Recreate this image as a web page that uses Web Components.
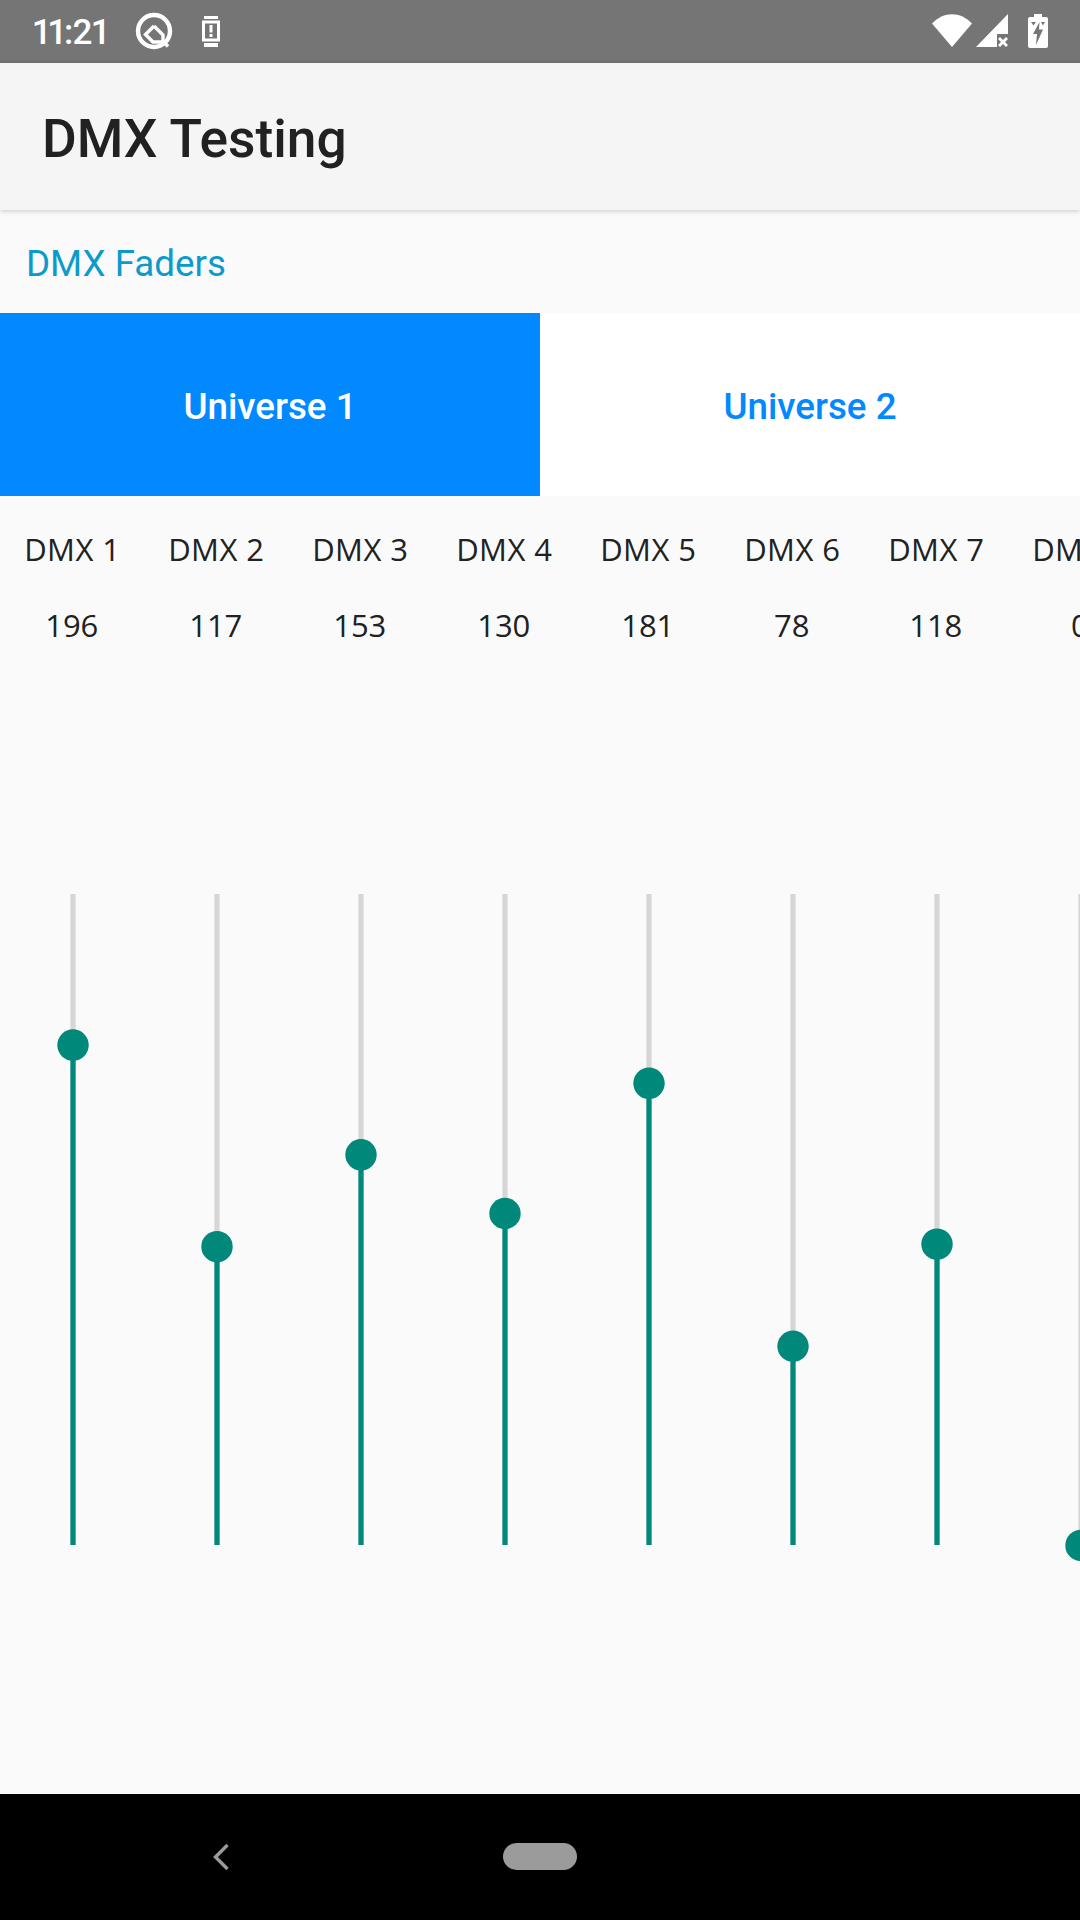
<!DOCTYPE html>
<html>
<head>
<meta charset="utf-8">
<style>
    html, body { margin: 0; padding: 0; }
    body { width: 1080px; height: 1920px; overflow: hidden; background: #fafafa; font-family: Roboto, sans-serif; }
    #app { display: flex; flex-direction: column; height: 1920px; }
</style>
</head>
<body>
<div id="app">
    <status-bar time="11:21"></status-bar>
    <app-bar>DMX Testing</app-bar>
    <section-title>DMX Faders</section-title>
    <universe-tabs>
        <universe-tab active>Universe 1</universe-tab>
        <universe-tab>Universe 2</universe-tab>
    </universe-tabs>
    <fader-bank>
        <dmx-fader channel="1" value="196"></dmx-fader>
        <dmx-fader channel="2" value="117"></dmx-fader>
        <dmx-fader channel="3" value="153"></dmx-fader>
        <dmx-fader channel="4" value="130"></dmx-fader>
        <dmx-fader channel="5" value="181"></dmx-fader>
        <dmx-fader channel="6" value="78"></dmx-fader>
        <dmx-fader channel="7" value="118"></dmx-fader>
        <dmx-fader channel="8" value="0"></dmx-fader>
    </fader-bank>
    <nav-bar></nav-bar>
</div>
<script>
(function(){

function define(name, html, proto)
{
    const template = document.createElement('template');
    template.innerHTML = html;

    customElements.define(name, class extends HTMLElement {
        constructor()
        {
            super();
            this._shadowRoot = this.attachShadow({mode: 'open'});
            this._shadowRoot.appendChild(template.content.cloneNode(true));
        }

        connectedCallback()
        {
            if(proto)
                proto.call(this, this._shadowRoot);
        }
    });
}

define('status-bar', `
<style>
    :host{
        display: flex;
        flex: none;
        height: 63px;
        background: #757575;
        color: #fff;
        align-items: center;
        font: 500 35px Roboto, sans-serif;
    }
    .left{ display: flex; align-items: center; margin-left: 33px; }
    .right{ display: flex; align-items: center; margin-left: auto; margin-right: 32px; margin-bottom: 2px; }
    svg{ display: block; fill: #fff; }
    #time{ width: 72px; margin-top: 1px; white-space: nowrap; letter-spacing: -0.6px; font-variant-numeric: proportional-nums; }
    #q{ margin-left: 30px; margin-bottom: 2px; }
    #watch{ margin-left: 29px; }
    #sig{ margin-left: 4px; }
    #bat{ margin-left: 20px; }
</style>
<div class="left">
    <span id="time"></span>
    <svg id="q" width="38" height="38" viewBox="0 0 38 38">
        <circle cx="19" cy="19" r="16" fill="none" stroke="#fff" stroke-width="4.4"/>
        <path d="M19 14L10.5 22.5L18 30H28M19 14L28 23V29L33 34.5" fill="none" stroke="#fff" stroke-width="3.4"/>
    </svg>
    <svg id="watch" width="18" height="31" viewBox="0 0 18 31">
        <path d="M2 0H16V3H2ZM2 27H16V31H2Z"/>
        <path fill-rule="evenodd" d="M0 4.5H18V25.5H0ZM3 7.5V22.5H15V7.5Z"/>
        <rect x="7.5" y="9" width="3" height="7.5"/>
        <rect x="7.5" y="18" width="3" height="3"/>
    </svg>
</div>
<div class="right">
    <svg width="40" height="33" viewBox="0 0 40 33"><path d="M0 9.5C11.5 -3 28.5 -3 40 9.5L20 33Z"/></svg>
    <svg id="sig" width="32" height="33" viewBox="0 0 32 33">
        <path fill-rule="evenodd" d="M32 0V33H0ZM21 20V33H32V20Z"/>
        <path d="M22 25L24 23L27 26L30 23L32 25L29 28L32 31L30 33L27 30L24 33L22 31L25 28Z"/>
    </svg>
    <svg id="bat" width="20" height="34" viewBox="0 0 20 34">
        <path fill-rule="evenodd" d="M6 0H14V3H18Q20 3 20 5V32Q20 34 18 34H2Q0 34 0 32V5Q0 3 2 3H6ZM11.5 8L5 20H9L8 31L15 15.5H11Z"/>
        <path d="M3 8H8L5.5 11.5ZM13 8H17L15 11.5Z" fill="#757575"/>
    </svg>
</div>`, function(root){
    root.getElementById('time').textContent = this.getAttribute('time');
});

define('app-bar', `
<style>
    :host{
        display: flex;
        flex: none;
        position: relative;
        height: 147px;
        box-sizing: border-box;
        padding: 4px 0 0 42px;
        align-items: center;
        background: #f5f5f5;
        color: #212121;
        font: 500 53.3px Roboto, sans-serif;
        box-shadow: 0 1px 5px rgba(0,0,0,.2);
    }
</style>
<slot></slot>`);

define('section-title', `
<style>
    :host{
        display: flex;
        flex: none;
        height: 103px;
        box-sizing: border-box;
        padding: 4px 0 0 26px;
        align-items: center;
        color: #0b9bcb;
        font: 400 36.75px Roboto, sans-serif;
    }
</style>
<slot></slot>`);

define('universe-tabs', `
<style>
    :host{
        display: flex;
        flex: none;
        height: 183px;
    }
</style>
<slot></slot>`);

define('universe-tab', `
<style>
    :host{
        display: flex;
        flex: 1;
        box-sizing: border-box;
        padding-top: 4px;
        align-items: center;
        justify-content: center;
        background: #fff;
        color: #0288ff;
        font: 500 36.75px Roboto, sans-serif;
    }
    :host([active]){
        background: #0288ff;
        color: #fff;
    }
</style>
<slot></slot>`);

define('fader-bank', `
<style>
    :host{
        display: flex;
        flex: 1;
        min-height: 0;
        overflow: hidden;
        padding-left: 1px;
    }
</style>
<slot></slot>`);

define('dmx-fader', `
<style>
    :host{
        display: flex;
        flex: none;
        flex-direction: column;
        align-items: center;
        width: 144px;
        color: #212121;
        font: 400 31px "Open Sans", sans-serif;
    }
    .label{ height: 37px; line-height: 37px; margin-top: 35px; margin-left: -1.5px; letter-spacing: .4px; white-space: nowrap; }
    .value{ height: 37px; line-height: 37px; margin-top: 39px; margin-left: -2.5px; }
    svg{ display: block; flex: none; margin-top: 234px; }
</style>
<div class="label"></div>
<div class="value"></div>
<svg width="144" height="683" viewBox="0 0 144 683">
    <rect x="69.4" y="16" width="5.2" height="651" fill="#d6d6d6"/>
    <rect class="fill" x="69.4" width="5.2" fill="#00897b"/>
    <circle class="thumb" cx="72" r="15.7" fill="#00897b"/>
</svg>`, function(root){
    const value = Number(this.getAttribute('value'));
    const y = 16 + (255 - value) / 255 * 651;
    root.querySelector('.label').textContent = 'DMX ' + this.getAttribute('channel');
    root.querySelector('.value').textContent = value;
    const fill = root.querySelector('.fill');
    fill.setAttribute('y', y);
    fill.setAttribute('height', 667 - y);
    root.querySelector('.thumb').setAttribute('cy', y + 0.4);
});

define('nav-bar', `
<style>
    :host{
        display: flex;
        flex: none;
        position: relative;
        height: 126px;
        background: #000;
        align-items: center;
        justify-content: center;
    }
    svg{ position: absolute; left: 212px; top: 49px; }
    .pill{
        width: 74px;
        height: 27px;
        margin-bottom: 2px;
        border-radius: 14px;
        background: #9b9b9b;
    }
</style>
<svg width="18" height="28" viewBox="0 0 18 28">
    <path d="M15.5 2L3.5 14L15.5 26" fill="none" stroke="#9b9b9b" stroke-width="3.4"/>
</svg>
<div class="pill"></div>`);

})();
</script>
</body>
</html>
